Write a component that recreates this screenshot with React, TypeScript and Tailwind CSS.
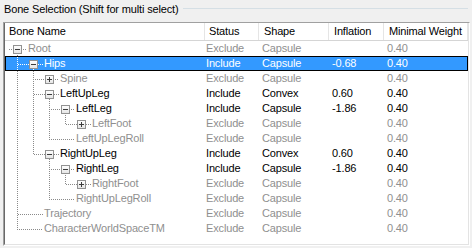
import React from "react";

type G = "F" | "H" | "N";
type Row = {
  name: string;
  L: number;
  box: "-" | "+" | null;
  g: G[];
  inc: boolean;
  shape: string;
  infl: string;
  mw: string;
  sel?: boolean;
};

const rows: Row[] = [
  { name: "Root", L: 0, box: "-", g: [], inc: false, shape: "Capsule", infl: "", mw: "0.40" },
  { name: "Hips", L: 1, box: "-", g: ["F"], inc: true, shape: "Capsule", infl: "-0.68", mw: "0.40", sel: true },
  { name: "Spine", L: 2, box: "+", g: ["F", "F"], inc: false, shape: "Capsule", infl: "", mw: "0.40" },
  { name: "LeftUpLeg", L: 2, box: "-", g: ["F", "F"], inc: true, shape: "Convex", infl: "0.60", mw: "0.40" },
  { name: "LeftLeg", L: 3, box: "-", g: ["F", "F", "F"], inc: true, shape: "Capsule", infl: "-1.86", mw: "0.40" },
  { name: "LeftFoot", L: 4, box: "+", g: ["F", "F", "F", "H"], inc: false, shape: "Capsule", infl: "", mw: "0.40" },
  { name: "LeftUpLegRoll", L: 3, box: null, g: ["F", "F", "H"], inc: false, shape: "Capsule", infl: "", mw: "0.40" },
  { name: "RightUpLeg", L: 2, box: "-", g: ["F", "H"], inc: true, shape: "Convex", infl: "0.60", mw: "0.40" },
  { name: "RightLeg", L: 3, box: "-", g: ["F", "N", "F"], inc: true, shape: "Capsule", infl: "-1.86", mw: "0.40" },
  { name: "RightFoot", L: 4, box: "+", g: ["F", "N", "F", "H"], inc: false, shape: "Capsule", infl: "", mw: "0.40" },
  { name: "RightUpLegRoll", L: 3, box: null, g: ["F", "N", "H"], inc: false, shape: "Capsule", infl: "", mw: "0.40" },
  { name: "Trajectory", L: 1, box: null, g: ["F"], inc: false, shape: "Capsule", infl: "", mw: "0.40" },
  { name: "CharacterWorldSpaceTM", L: 1, box: null, g: ["H"], inc: false, shape: "Capsule", infl: "", mw: "0.40" },
];

const X0 = 5;

function Connector({ row, top }: { row: Row; top: number }) {
  const { L, box, g, sel } = row;
  const w = L * 16 + 23;
  let d = "";
  const dot = (x: number, y: number) => {
    if ((x + X0 + y + top) % 2 === 0) d += `M${x} ${y}h1v1h-1z`;
  };
  const hline = (x1: number, x2: number, y: number) => {
    for (let x = x1; x <= x2; x++) dot(x, y);
  };
  const vline = (x: number, y1: number, y2: number) => {
    for (let y = y1; y <= y2; y++) dot(x, y);
  };
  g.forEach((f, k) => {
    const x = k * 16 + 12;
    if (f === "F") vline(x, 0, 14);
    else if (f === "H") vline(x, 0, 8);
  });
  if (box === "-") vline(L * 16 + 12, 13, 14);
  const start = L === 0 ? 3 : (L - 1) * 16 + 12;
  const end = box ? L * 16 + 7 : L * 16 + 21;
  hline(start, end, 8);
  if (box) hline(L * 16 + 17, L * 16 + 21, 8);
  const bx = L * 16 + 8;
  return (
    <svg width={w} height={15} className="shrink-0 block" shapeRendering="crispEdges">
      <path d={d} fill={sel ? "#ffffff" : "#8a8a8a"} />
      {box && (
        <g>
          <defs>
            <linearGradient id={`bg${top}`} x1="0" y1="0" x2="0" y2="1">
              <stop offset="0" stopColor="#ffffff" />
              <stop offset="1" stopColor="#e4e4e4" />
            </linearGradient>
          </defs>
          <rect x={bx + 0.5} y={4.5} width={8} height={8} fill={`url(#bg${top})`} stroke="#919191" />
          <rect x={bx + 2} y={8} width={5} height={1} fill="#3c3c3c" />
          {box === "+" && <rect x={bx + 4} y={6} width={1} height={5} fill="#3c3c3c" />}
        </g>
      )}
    </svg>
  );
}

export default function App() {
  return (
    <div className="w-[472px] h-[248px] bg-[#f0f0f0] font-['Liberation_Sans',Arial,sans-serif] text-[11px] tracking-[-0.15px] text-black overflow-hidden">
      <div className="flex items-center h-[18px] pl-[4px] pr-[4px]">
        <span className="leading-[18px] whitespace-nowrap">Bone Selection (Shift for multi select)</span>
        <div className="flex-1 h-px bg-[#d5dfe5] ml-[4px] mt-[-2px]" />
      </div>
      <div className="mt-[4px] ml-[3px] w-[467px] h-[224px] border-l border-t border-l-[#a0a0a0] border-t-[#a0a0a0] border-r border-b border-r-white border-b-white">
        <div className="w-full h-full border-l border-l-[#696969] border-r border-r-[#e3e3e3] border-b border-b-[#e3e3e3] bg-white">
          <div className="flex h-[18px] border-b border-b-[#d5d5d5] bg-white leading-[17px]">
            <div className="w-[200px] pl-[4px] border-r border-r-[#e5e5e5]">Bone Name</div>
            <div className="w-[54px] pl-[4px] border-r border-r-[#e5e5e5]">Status</div>
            <div className="w-[70px] pl-[5px] border-r border-r-[#e5e5e5]">Shape</div>
            <div className="w-[55px] pl-[5px] border-r border-r-[#e5e5e5]">Inflation</div>
            <div className="w-[84px] pl-[5px] border-r border-r-[#e5e5e5]">Minimal Weight</div>
          </div>
          {rows.map((r, i) => {
            const top = 41 + i * 15;
            const color = r.sel ? "text-white" : r.inc ? "text-black" : "text-[#8f8f8f]";
            return (
              <div
                key={r.name}
                className={`flex h-[15px] leading-[15px] whitespace-nowrap ${color} ${r.sel ? "bg-[#3399ff] outline outline-1 outline-black -outline-offset-1" : ""}`}
              >
                <div className="w-[200px] flex items-center">
                  <Connector row={r} top={top} />
                  <span>{r.name}</span>
                </div>
                <div className="w-[54px] pl-[1px]">{r.inc ? "Include" : "Exclude"}</div>
                <div className="w-[70px] pl-[3px]">{r.shape}</div>
                <div className="w-[55px] pl-[3px]">{r.infl}</div>
                <div className="w-[84px] pl-[3px]">{r.mw}</div>
              </div>
            );
          })}
        </div>
      </div>
    </div>
  );
}
